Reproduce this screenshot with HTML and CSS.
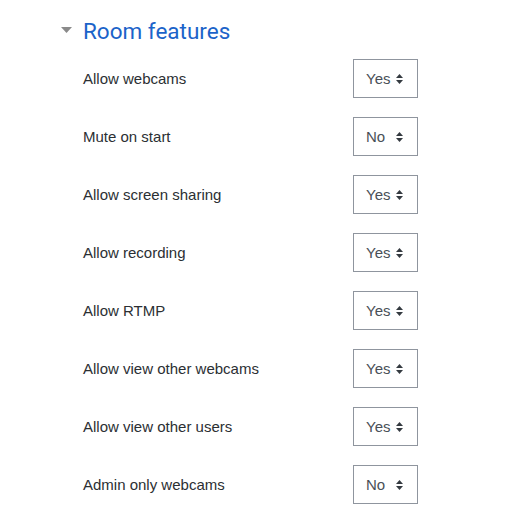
FILE: index.html
```html
<!DOCTYPE html>
<html>
<head>
<meta charset="utf-8">
<link rel="stylesheet" href="styles.css">
</head>
<body>
<div class="section">
  <div class="header">
    <svg class="caret" width="11" height="6" viewBox="0 0 11 6"><path d="M0 0 H11 L5.5 6 Z" fill="#8a8a8a"/></svg>
    <h3 class="title">Room features</h3>
  </div>
  <div class="rows">
    <div class="row"><span class="label">Allow webcams</span><div class="select"><span>Yes</span><svg class="arr" width="7" height="10" viewBox="0 0 7 10"><path d="M0 4 L3.5 0 L7 4 Z M0 6 L3.5 10 L7 6 Z" fill="#343a40"/></svg></div></div>
    <div class="row"><span class="label">Mute on start</span><div class="select"><span>No</span><svg class="arr" width="7" height="10" viewBox="0 0 7 10"><path d="M0 4 L3.5 0 L7 4 Z M0 6 L3.5 10 L7 6 Z" fill="#343a40"/></svg></div></div>
    <div class="row"><span class="label">Allow screen sharing</span><div class="select"><span>Yes</span><svg class="arr" width="7" height="10" viewBox="0 0 7 10"><path d="M0 4 L3.5 0 L7 4 Z M0 6 L3.5 10 L7 6 Z" fill="#343a40"/></svg></div></div>
    <div class="row"><span class="label">Allow recording</span><div class="select"><span>Yes</span><svg class="arr" width="7" height="10" viewBox="0 0 7 10"><path d="M0 4 L3.5 0 L7 4 Z M0 6 L3.5 10 L7 6 Z" fill="#343a40"/></svg></div></div>
    <div class="row"><span class="label">Allow RTMP</span><div class="select"><span>Yes</span><svg class="arr" width="7" height="10" viewBox="0 0 7 10"><path d="M0 4 L3.5 0 L7 4 Z M0 6 L3.5 10 L7 6 Z" fill="#343a40"/></svg></div></div>
    <div class="row"><span class="label">Allow view other webcams</span><div class="select"><span>Yes</span><svg class="arr" width="7" height="10" viewBox="0 0 7 10"><path d="M0 4 L3.5 0 L7 4 Z M0 6 L3.5 10 L7 6 Z" fill="#343a40"/></svg></div></div>
    <div class="row"><span class="label">Allow view other users</span><div class="select"><span>Yes</span><svg class="arr" width="7" height="10" viewBox="0 0 7 10"><path d="M0 4 L3.5 0 L7 4 Z M0 6 L3.5 10 L7 6 Z" fill="#343a40"/></svg></div></div>
    <div class="row"><span class="label">Admin only webcams</span><div class="select"><span>No</span><svg class="arr" width="7" height="10" viewBox="0 0 7 10"><path d="M0 4 L3.5 0 L7 4 Z M0 6 L3.5 10 L7 6 Z" fill="#343a40"/></svg></div></div>
  </div>
</div>
</body>
</html>
```
FILE: styles.css
```css
html, body {
  margin: 0;
  padding: 0;
  background: #ffffff;
}
body {
  font-family: "Liberation Sans", Arial, sans-serif;
  color: #333333;
}
.section {
  padding: 16px 0 0 61px;
}
.header {
  display: flex;
  align-items: center;
  height: 30px;
}
.caret {
  display: block;
  margin-right: 11px;
  margin-top: -2px;
}
.title {
  margin: 0;
  font-family: Roboto, "Liberation Sans", sans-serif;
  font-size: 22.5px;
  font-weight: 400;
  line-height: 30px;
  color: #1b63c9;
}
.rows {
  margin-top: 13px;
  padding-left: 22px;
  display: flex;
  flex-direction: column;
  gap: 19px;
}
.row {
  display: flex;
  align-items: center;
  height: 39px;
}
.label {
  width: 270px;
  font-size: 15px;
  color: #2b2f33;
}
.select {
  box-sizing: border-box;
  width: 65px;
  height: 39px;
  border: 1px solid #8f959e;
  display: flex;
  align-items: center;
  justify-content: space-between;
  padding: 0 14px 0 12px;
  font-size: 15px;
  color: #495057;
}
.arr {
  display: block;
}
```
